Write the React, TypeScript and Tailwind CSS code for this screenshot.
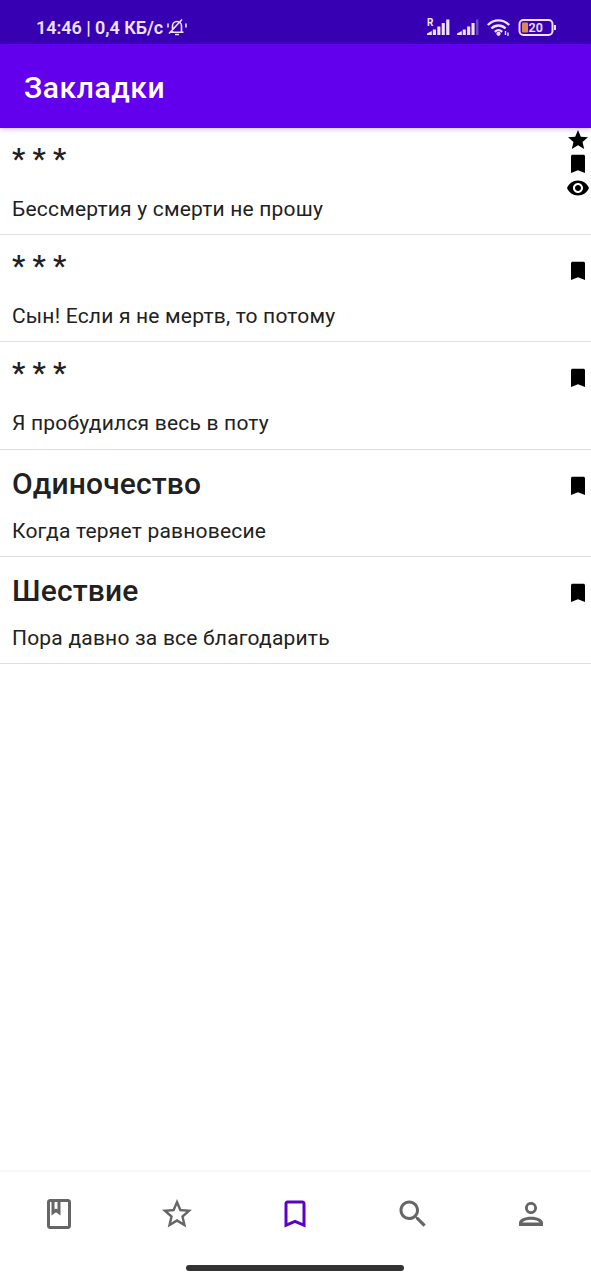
import type { ReactNode } from "react";

const paths = {
  star: "M12 17.27L18.18 21l-1.64-7.03L22 9.24l-7.19-.61L12 2 9.19 8.63 2 9.24l5.46 4.73L5.82 21z",
  bookmark: "M17.500 2.800H6.500c-.8 0-1.500.7-1.500 1.500V21l7-2.800 7 2.800V4.300c0-.8-.7-1.500-1.500-1.500z",
  eye: "M12 4.5C7 4.5 2.73 7.61 1 12c1.73 4.39 6 7.5 11 7.5s9.27-3.11 11-7.5c-1.73-4.39-6-7.5-11-7.5zM12 17c-2.76 0-5-2.24-5-5s2.24-5 5-5 5 2.24 5 5-2.24 5-5 5zm0-8c-1.66 0-3 1.34-3 3s1.34 3 3 3 3-1.34 3-3-1.34-3-3-3z",
  book: "M18 2H6c-1.1 0-2 .9-2 2v16c0 1.1.9 2 2 2h12c1.1 0 2-.9 2-2V4c0-1.1-.9-2-2-2zM9 4h2v5l-1-.75L9 9V4zm9 16H6V4h1v9l3-2.25L13 13V4h5v16z",
  starOutline:
    "M22 9.24l-7.19-.62L12 2 9.19 8.63 2 9.24l5.46 4.73L5.82 21 12 17.27 18.18 21l-1.63-7.03L22 9.24zM12 15.4l-3.76 2.27 1-4.28-3.32-2.88 4.38-.38L12 6.1l1.71 4.04 4.38.38-3.32 2.88 1 4.28L12 15.4z",
  bookmarkOutline: "M17 3H7c-1.1 0-1.99.9-1.99 2L5 21l7-3 7 3V5c0-1.1-.9-2-2-2zm0 15l-5-2.18L7 18V5h10v13z",
  search:
    "M15.5 14h-.79l-.28-.27C15.41 12.59 16 11.11 16 9.5 16 5.91 13.09 3 9.5 3S3 5.91 3 9.5 5.91 16 9.5 16c1.61 0 3.09-.59 4.23-1.57l.27.28v.79l5 4.99L20.49 19l-4.99-5zm-6 0C7.01 14 5 11.99 5 9.5S7.01 5 9.5 5 14 7.01 14 9.5 11.99 14 9.5 14z",
  person:
    "M12 5.9a2.1 2.1 0 1 1 0 4.2 2.1 2.1 0 0 1 0-4.2M12 4C9.79 4 8 5.79 8 8s1.79 4 4 4 4-1.79 4-4-1.79-4-4-4zM12 13.9c-4.400 0-8 1.700-8 4.100v2h16v-2c0-2.400-3.600-4.100-8-4.100zm0 1.900c2.700 0 5 .8 5.800 1.900H6.200c.8-1.100 3.100-1.900 5.800-1.900z",
};

type IconName = keyof typeof paths;

function Icon({ name, className }: { name: IconName; className: string }) {
  return (
    <svg viewBox="0 0 24 24" fill="currentColor" className={className} aria-hidden="true">
      <path d={paths[name]} />
    </svg>
  );
}

type Poem = { title: string; line: string; favorite?: boolean; viewed?: boolean };

const poems: Poem[] = [
  { title: "* * *", line: "Бессмертия у смерти не прошу", favorite: true, viewed: true },
  { title: "* * *", line: "Сын! Если я не мертв, то потому" },
  { title: "* * *", line: "Я пробудился весь в поту" },
  { title: "Одиночество", line: "Когда теряет равновесие" },
  { title: "Шествие", line: "Пора давно за все благодарить" },
];

const tabs: { name: IconName; label: string }[] = [
  { name: "book", label: "Книга" },
  { name: "starOutline", label: "Избранное" },
  { name: "bookmarkOutline", label: "Закладки" },
  { name: "search", label: "Поиск" },
  { name: "person", label: "Автор" },
];

function StatusBar() {
  return (
    <div className="flex h-11 shrink-0 items-center bg-[#3700b3] pt-3 pr-[34px] pl-9 text-[#efe0ff]">
      <span className="text-[18px] leading-5 font-semibold tracking-[-0.05px] whitespace-nowrap">14:46 | 0,4 КБ/с</span>
      {/* muted bell */}
      <svg viewBox="0 0 20 20" className="ml-1 h-5 w-5" fill="none" stroke="currentColor" strokeWidth="1.6">
        <path d="M3.500 14.200h13M5.500 13.500V8a4.500 4.500 0 0 1 9 0v5.500M8 16.500h4M2 15.500 15 1.500M1 5.500v4M19 5.500v4" />
      </svg>
      <div className="ml-auto flex items-center">
        <svg viewBox="0 0 24 20" className="h-5 w-6" fill="currentColor">
          <text x="0" y="8" fontSize="10" fontWeight="700">R</text>
          <path d="M0 17v-1.500l4.800-2.500v4zM5.800 11.500H9V17H5.800zM10.300 8.500h3.100V17h-3.100zM14.700 5h3.100v12h-3.100zM19.200 1.500h3.200V17h-3.200z" />
        </svg>
        <svg viewBox="0 0 22 20" className="ml-1.5 h-5 w-[22px]" fill="currentColor">
          <path d="M0 17v-1.500l4.800-2.500v4zM5.700 11.500h3.100V17H5.700zM10.100 8.500h3.100V17h-3.100zM14.500 5h3.100v12h-3.100z" />
          <path d="M19 1.500h2.500V17H19z" opacity=".3" />
        </svg>
        <svg viewBox="0 0 24 20" className="ml-2 h-5 w-6" fill="none" stroke="currentColor" strokeWidth="2.3">
          <path d="M.8 7c6.200-6.200 15.200-6.200 21.400 0M4.400 10.500c4.200-4 10-4 14.200 0M7.800 13.800c2.400-2.200 5-2.200 7.400 0" />
          <circle cx="11.500" cy="15.800" r="1" />
          <path d="M18.500 13v4m2.500-2.500V18" strokeWidth="1.4" />
        </svg>
        <svg viewBox="0 0 39 18" className="ml-[7px] h-[18px] w-[39px]">
          <rect x="1.500" y="1" width="33" height="15" rx="4" fill="none" stroke="currentColor" strokeWidth="2" />
          <rect x="4" y="3.500" width="6" height="10" rx="1" fill="#d88958" />
          <path d="M37 6v5" stroke="currentColor" strokeWidth="2" />
          <text x="10.500" y="13" fontSize="12.500" fontWeight="600" fill="currentColor">20</text>
        </svg>
      </div>
    </div>
  );
}

function IconSlot({ children }: { children?: ReactNode }) {
  return <div className="h-6 w-6">{children}</div>;
}

function PoemRow({ poem }: { poem: Poem }) {
  const untitled = poem.title.startsWith("*");
  return (
    <li className="flex h-[107.2px] justify-between border-b-[1.5px] border-[#dedede]">
      <div className="pl-3">
        <h2
          className={`flex h-[66px] items-center text-[30px] leading-9 font-medium ${untitled ? "pb-1 tracking-[-0.1px]" : "pt-0.5 tracking-[0.15px]"}`}
        >
          {poem.title}
        </h2>
        <p className="pt-px text-[21px] leading-7 tracking-[0.2px]">{poem.line}</p>
      </div>
      <div className="flex flex-col pr-[0.6px] text-black">
        <IconSlot>{poem.favorite && <Icon name="star" className="h-6 w-6" />}</IconSlot>
        <IconSlot>
          <Icon name="bookmark" className="h-6 w-6" />
        </IconSlot>
        <IconSlot>{poem.viewed && <Icon name="eye" className="h-6 w-6" />}</IconSlot>
      </div>
    </li>
  );
}

export default function App() {
  return (
    <div className="flex h-[1280px] w-[591px] flex-col overflow-hidden bg-white font-[Roboto,sans-serif] text-[#212121]">
      <StatusBar />
      <header className="z-10 flex h-[84px] shrink-0 items-center bg-[#6200ee] pt-[3px] pl-6 text-white shadow-[0_1px_5px_rgba(98,0,238,0.3)]">
        <h1 className="text-[30px] leading-9 font-medium tracking-[0.6px]">Закладки</h1>
      </header>
      <main className="flex-1">
        <ul>
          {poems.map((poem, i) => (
            <PoemRow key={i} poem={poem} />
          ))}
        </ul>
      </main>
      <nav className="flex h-[110px] shrink-0 flex-col items-center border-t-2 border-[#f7f7f7]">
        <div className="flex h-[84px] w-full items-center pr-px">
          {tabs.map((tab) => (
            <button
              key={tab.name}
              type="button"
              aria-label={tab.label}
              className={`flex flex-1 justify-center ${tab.name === "bookmarkOutline" ? "text-[#5a00c8]" : "text-[#666666]"}`}
            >
              <Icon name={tab.name} className="h-9 w-9" />
            </button>
          ))}
        </div>
        <div className="mt-[9px] mr-px h-1.5 w-[218px] rounded-full bg-[#333333]" />
      </nav>
    </div>
  );
}
